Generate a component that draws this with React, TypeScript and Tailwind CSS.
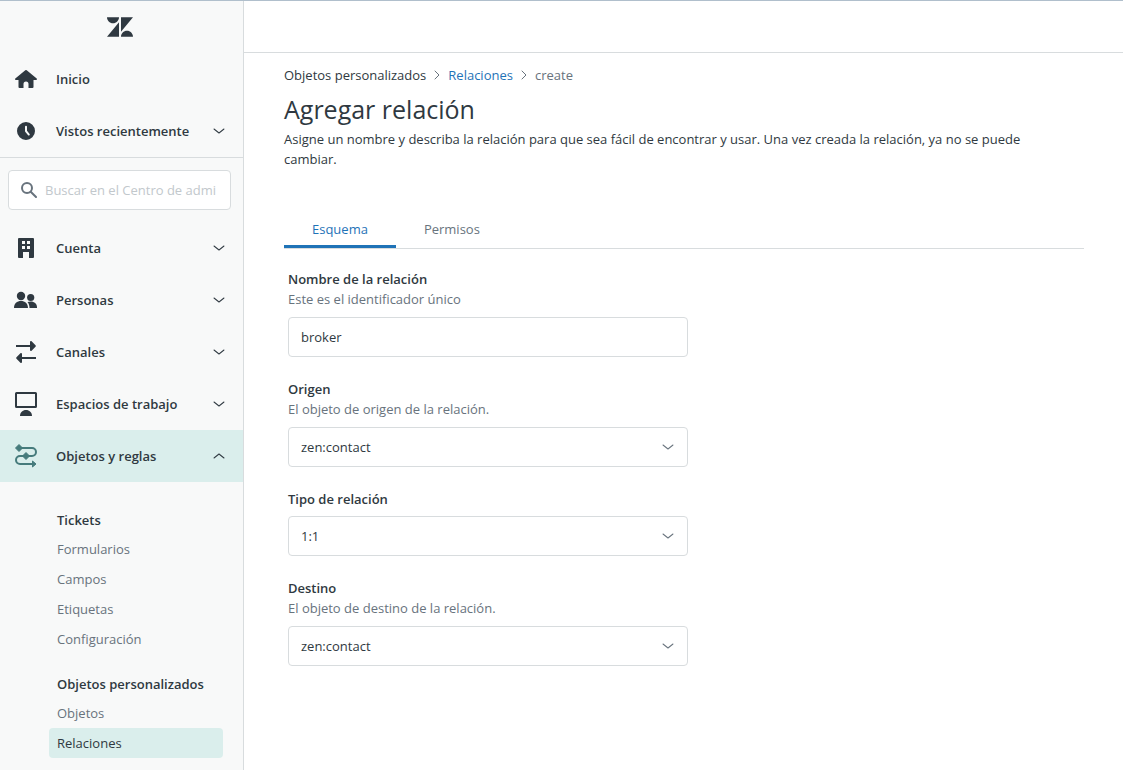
import type { ReactNode } from "react";

function ZendeskMark() {
  return (
    <svg viewBox="0 2.9 24 18.2" className="h-5 w-[26px]" fill="currentColor" aria-hidden="true">
      <path d="M12.914 2.904V16.29L24 2.905H12.914zM0 2.906C0 5.966 2.483 8.45 5.543 8.45s5.542-2.484 5.543-5.544H0zm11.086 4.807L0 21.096h11.086V7.713zm7.37 7.84c-3.063 0-5.542 2.48-5.542 5.543H24c0-3.06-2.48-5.543-5.543-5.543z" />
    </svg>
  );
}

function Icon({ children, className = "" }: { children: ReactNode; className?: string }) {
  return (
    <svg viewBox="0 0 26 26" className={`size-[26px] shrink-0 ${className}`} fill="currentColor" aria-hidden="true">
      {children}
    </svg>
  );
}

const homeIcon = (
  <Icon>
    <path d="M12.3 4.3a1 1 0 0 1 1.4 0l10 8.2c.6.6.3 1.500-.6 1.500H20.500v7a1 1 0 0 1-1 1h-4v-4a2.500 2.500 0 0 0-5 0v4h-4a1 1 0 0 1-1-1v-7H2.900c-.9 0-1.200-.9-.6-1.500z" />
  </Icon>
);
const clockIcon = (
  <Icon>
    <path fillRule="evenodd" d="M13 4a9 9 0 1 0 0 18 9 9 0 0 0 0-18zm-1 4.700a1 1 0 0 1 2 0v4l2.600 3.200a1 1 0 0 1-1.500 1.300l-2.900-3.500a1 1 0 0 1-.2-.6z" />
  </Icon>
);
const buildingIcon = (
  <Icon>
    <path fillRule="evenodd" d="M6 3h14a1 1 0 0 1 1 1v18a1 1 0 0 1-1 1h-4v-6h-6v6H6a1 1 0 0 1-1-1V4a1 1 0 0 1 1-1zm3 3v3h3V6zm5 0v3h3V6zm-5 5v3h3v-3zm5 0v3h3v-3z" />
  </Icon>
);
const peopleIcon = (
  <Icon>
    <circle cx="8" cy="9" r="4.200" />
    <circle cx="17.700" cy="10.500" r="3.600" />
    <path d="M1 21c0-4.500 3-7 7-7s7 2.500 7 7zM16.500 21c0-2.500-.6-4.300-2-6 1-.4 2-.6 3.200-.6 3.700 0 6.300 2.300 6.300 5.600v1z" />
  </Icon>
);
const arrowsIcon = (
  <Icon>
    <path d="M3 6h14V3c0-1 .9-1.300 1.600-.7l3.900 3.900a1.100 1.100 0 0 1 0 1.600l-3.900 3.900c-.7.6-1.600.3-1.600-.7V8H3zM23 20H9v3c0 1-.9 1.300-1.600.7l-3.900-3.900a1.100 1.100 0 0 1 0-1.600l3.900-3.900c.7-.6 1.600-.3 1.600.7v3h14z" />
  </Icon>
);
const monitorIcon = (
  <Icon>
    <rect x="3" y="2" width="20" height="14" rx="0.500" fill="none" stroke="currentColor" strokeWidth="2" />
    <path d="M7 25c0-3.500 2.600-6 6-6s6 2.500 6 6z" />
  </Icon>
);
const rulesIcon = (
  <Icon className="text-[#467b7c]">
    <path d="M6 5h13a4 4 0 0 1 0 8H7a4 4 0 0 0 0 8h13" fill="none" stroke="currentColor" strokeWidth="2" />
    <path d="M6 1.500 9.500 5 6 8.500 2.500 5zM13 9.500l3.500 3.500-3.500 3.500L9.500 13zM19.500 18l3.500 3-3.500 3z" stroke="currentColor" strokeLinejoin="round" />
  </Icon>
);

function Chevron({ up = false, className = "" }: { up?: boolean; className?: string }) {
  return (
    <svg viewBox="0 0 16 16" className={`size-4 shrink-0 ${up ? "rotate-180" : ""} ${className}`} fill="currentColor" aria-hidden="true">
      <path d="M12.688 5.610a.5.5 0 0 1 .69.718l-.066.062-5 4a.5.5 0 0 1-.542.054l-.082-.054-5-4a.5.5 0 0 1 .55-.83l.074.05L8 9.359l4.688-3.750z" />
    </svg>
  );
}

function Separator() {
  return (
    <svg viewBox="0 0 12 12" className="size-3 shrink-0 text-[#68737d]" fill="none" stroke="currentColor" strokeLinecap="round" strokeLinejoin="round" aria-hidden="true">
      <path d="M4 2l4 4-4 4" />
    </svg>
  );
}

function NavRow({ icon, label, state, active = false }: { icon: ReactNode; label: string; state?: "open" | "closed"; active?: boolean }) {
  const content = (
    <>
      {icon}
      <span className="flex-1 text-left font-semibold">{label}</span>
      {state && <Chevron up={state === "open"} />}
    </>
  );
  const row = `flex h-13 w-full items-center gap-[17px] pr-4 pl-[13px] ${active ? "bg-[#daeeec]" : ""}`;
  return state ? (
    <button type="button" aria-expanded={state === "open"} className={row}>{content}</button>
  ) : (
    <a href="#inicio" className={row}>{content}</a>
  );
}

function SubNav({ title, items, current }: { title: string; items: string[]; current?: string }) {
  return (
    <section>
      <h2 className="mb-1 px-2 leading-5 font-semibold">{title}</h2>
      <ul>
        {items.map((item) => (
          <li key={item}>
            <a
              href={`#${item.toLowerCase()}`}
              aria-current={item === current ? "page" : undefined}
              className={`flex h-[30px] items-center rounded px-2 ${item === current ? "bg-[#daeeec]" : "text-[#68737d]"}`}
            >
              {item}
            </a>
          </li>
        ))}
      </ul>
    </section>
  );
}

function Field({ id, label, hint, children }: { id: string; label: string; hint?: string; children: ReactNode }) {
  return (
    <div className="max-w-[400px]">
      <label htmlFor={id} className="block font-semibold">{label}</label>
      {hint && <p id={`${id}-hint`} className="text-[#68737d]">{hint}</p>}
      <div className={hint ? "mt-2" : "mt-[7px]"}>{children}</div>
    </div>
  );
}

const control = "h-10 w-full rounded border border-[#d8dcde] bg-white px-3";

function SelectBox({ id, value, hinted = false }: { id: string; value: string; hinted?: boolean }) {
  return (
    <div className="relative">
      <select id={id} defaultValue={value} aria-describedby={hinted ? `${id}-hint` : undefined} className={`${control} appearance-none`}>
        <option>{value}</option>
      </select>
      <Chevron className="pointer-events-none absolute top-3 right-3 text-[#68737d]" />
    </div>
  );
}

export default function App() {
  return (
    <div className="flex min-h-screen border-t border-[#b0bfcc] bg-white font-['Open_Sans','Noto_Sans',sans-serif] text-[13px] leading-5 text-[#2f3941]">
      <aside className="w-[244px] shrink-0 border-r border-[#d8dcde] bg-[#f8f9f9]">
        <div className="flex h-13 items-center justify-center pr-1">
          <ZendeskMark />
        </div>
        <nav>
          <div className="border-b border-[#d8dcde]">
            <NavRow icon={homeIcon} label="Inicio" />
            <NavRow icon={clockIcon} label="Vistos recientemente" state="closed" />
          </div>
          <div className="py-3 pr-3 pl-2">
            <label className="flex h-10 items-center gap-2 rounded border border-[#d8dcde] bg-white px-3">
              <svg viewBox="0 0 16 16" className="size-4 shrink-0 text-[#68737d]" fill="none" stroke="currentColor" strokeWidth="2" strokeLinecap="round" aria-hidden="true">
                <circle cx="6" cy="6" r="5" />
                <path d="M15 15 9.700 9.700" />
              </svg>
              <input type="text" aria-label="Buscar" placeholder="Buscar en el Centro de admi" className="w-full min-w-0 placeholder:text-[#c2c8cc]" />
            </label>
          </div>
          <NavRow icon={buildingIcon} label="Cuenta" state="closed" />
          <NavRow icon={peopleIcon} label="Personas" state="closed" />
          <NavRow icon={arrowsIcon} label="Canales" state="closed" />
          <NavRow icon={monitorIcon} label="Espacios de trabajo" state="closed" />
          <NavRow icon={rulesIcon} label="Objetos y reglas" state="open" active />
          <div className="flex flex-col gap-5 pt-7 pr-5 pb-3 pl-[49px]">
            <SubNav title="Tickets" items={["Formularios", "Campos", "Etiquetas", "Configuración"]} />
            <SubNav title="Objetos personalizados" items={["Objetos", "Relaciones"]} current="Relaciones" />
          </div>
        </nav>
      </aside>

      <div className="min-w-0 flex-1">
        <header className="h-13 border-b border-[#d8dcde]" />
        <main className="max-w-[860px] pt-3 pr-5 pl-10">
          <nav aria-label="Ruta" className="flex items-center gap-[5px]">
            <a href="#objetos">Objetos personalizados</a>
            <Separator />
            <a href="#relaciones" className="text-[#1f73b7]">Relaciones</a>
            <Separator />
            <span className="text-[#68737d]">create</span>
          </nav>
          <h1 className="mt-2 text-[25px] leading-8">Agregar relación</h1>
          <p className="mt-1 pr-10">
            Asigne un nombre y describa la relación para que sea fácil de encontrar y usar. Una vez creada la relación, ya no se puede cambiar.
          </p>
          <div role="tablist" className="mt-10 flex border-b border-[#d8dcde] text-center">
            <button type="button" role="tab" aria-selected="true" className="h-[39px] border-b-3 border-[#1f73b7] px-7 pt-1 text-[#1f73b7]">Esquema</button>
            <button type="button" role="tab" aria-selected="false" className="h-[39px] border-b-3 border-transparent px-7 pt-1 text-[#68737d]">Permisos</button>
          </div>
          <form className="flex flex-col gap-[22px] px-1 py-5">
            <Field id="nombre" label="Nombre de la relación" hint="Este es el identificador único">
              <input id="nombre" type="text" defaultValue="broker" aria-describedby="nombre-hint" className={control} />
            </Field>
            <Field id="origen" label="Origen" hint="El objeto de origen de la relación.">
              <SelectBox id="origen" value="zen:contact" hinted />
            </Field>
            <Field id="tipo" label="Tipo de relación">
              <SelectBox id="tipo" value="1:1" />
            </Field>
            <Field id="destino" label="Destino" hint="El objeto de destino de la relación.">
              <SelectBox id="destino" value="zen:contact" hinted />
            </Field>
          </form>
        </main>
      </div>
    </div>
  );
}
